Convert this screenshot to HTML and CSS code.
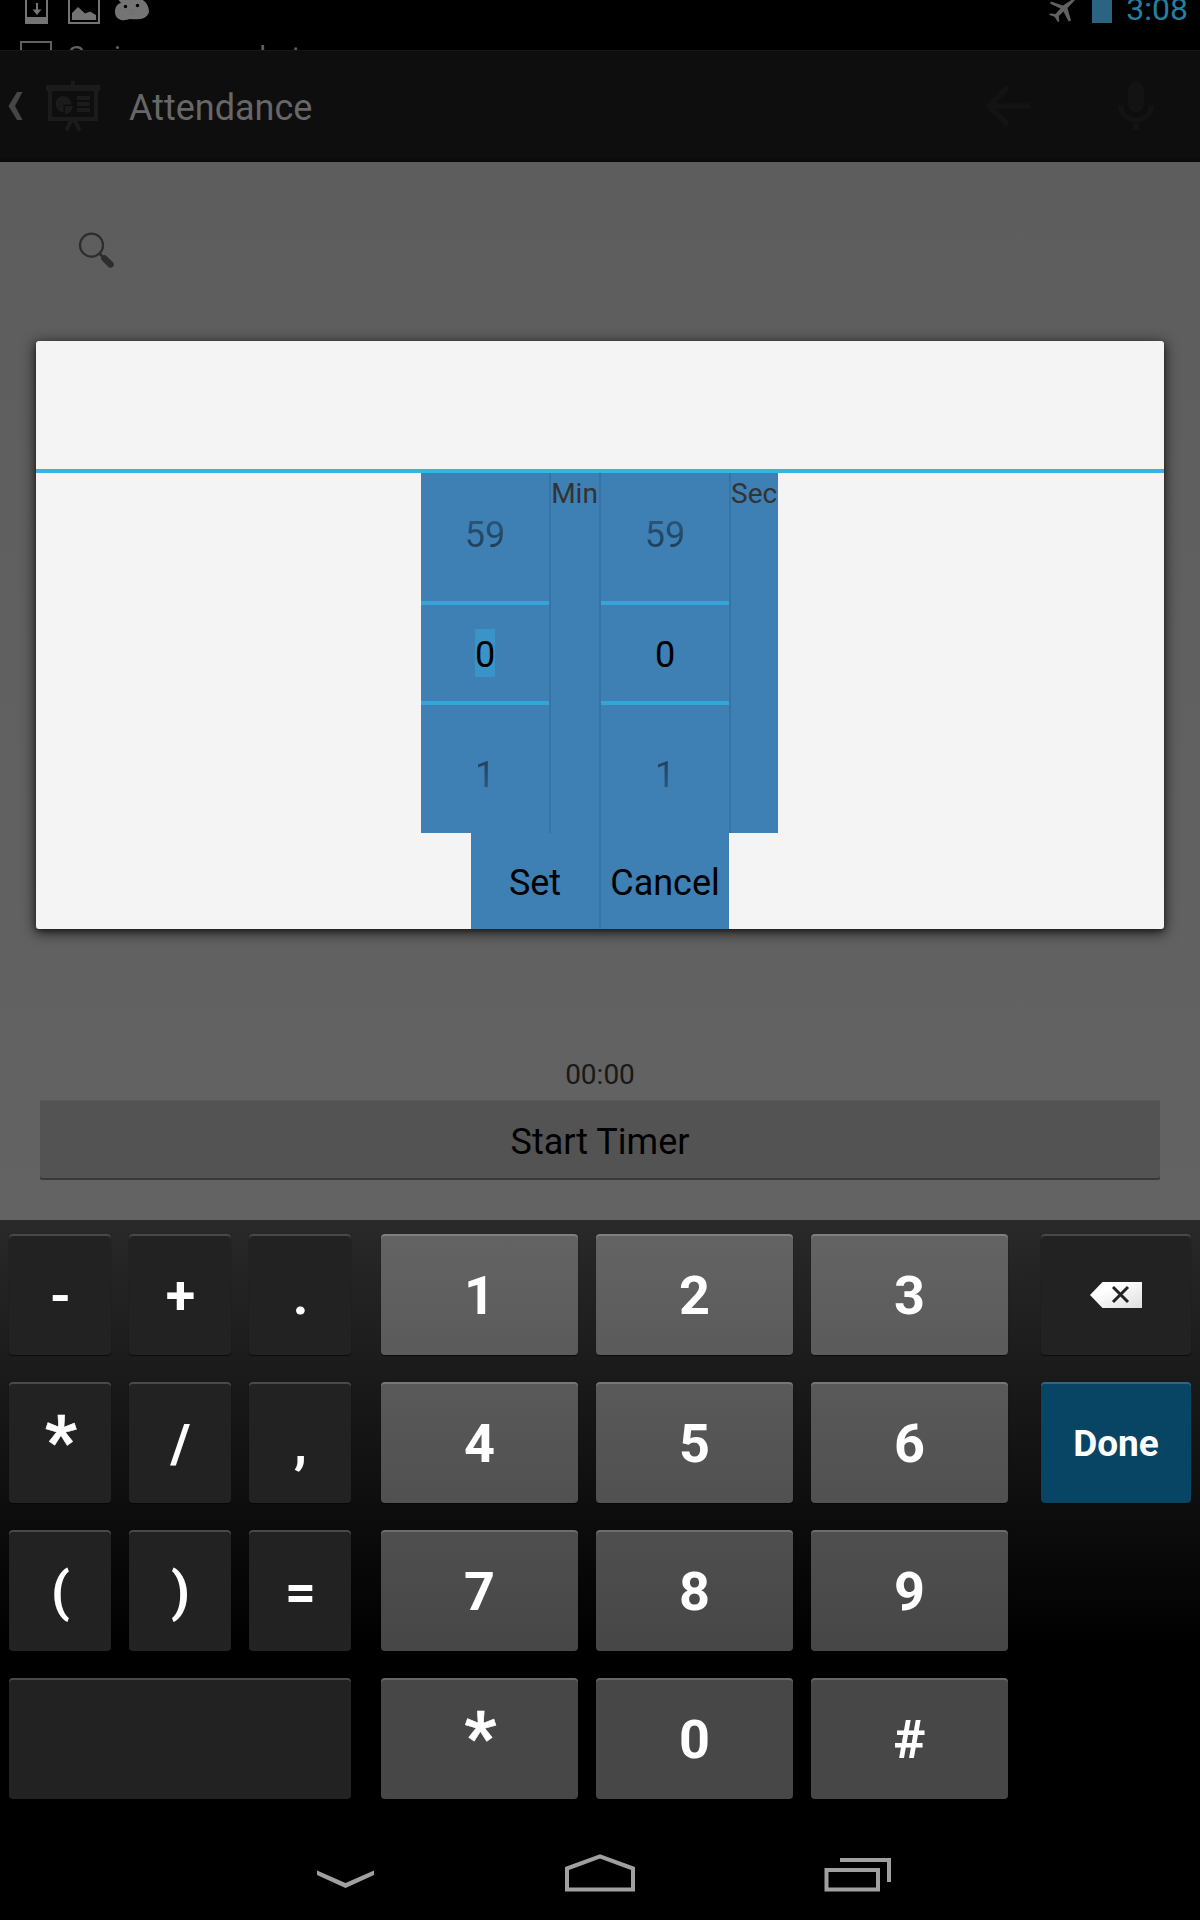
FILE: index.html
```html
<!DOCTYPE html>
<html lang="en">
<head>
<meta charset="utf-8">
<title>Attendance</title>
<link rel="stylesheet" href="styles.css">
</head>
<body>
<div class="screen">
  <header class="status">
    <div class="status-row">
      <svg class="status-icons" width="160" height="26" viewBox="0 0 160 26">
        <path d="M26 -2V23H47V-2" fill="none" stroke="#747474" stroke-width="2"/>
        <path d="M25 17H48V24H25Z" fill="#747474"/>
        <path d="M37 3V12" stroke="#747474" stroke-width="2"/>
        <path d="M32.500 9.500H41.500L37 15Z" fill="#747474"/>
        <path d="M69 -2V23H99V-2" fill="none" stroke="#747474" stroke-width="2"/>
        <path d="M72 20V13L78 7L85 13.500L90 11.500L96 15V20Z" fill="#747474"/>
        <path d="M117 -2L121 3C116 4 114 10 115.500 15C118 21 124 21 130 19C140 20 147 19 149 12C149 4 144 0 139 -2Z" fill="#747474"/>
        <circle cx="125.500" cy="6.500" r="1.700" fill="#000"/><circle cx="137.500" cy="5.500" r="1.700" fill="#000"/>
        <path d="M130 10V16M133 10V16" stroke="#656565" stroke-dasharray="1 2"/>
      </svg>
      <div class="status-right">
        <svg width="64" height="26" viewBox="1048 0 64 26">
          <path d="M1074.500 -2L1063 5.500L1051 1.500L1050 3.500L1060.500 8.500L1055.500 14L1050 13.500L1049 14.800L1054.500 16.800L1058 22L1059.300 21.200L1058.800 16L1063.500 11.500L1068.500 21.500L1071 20.500L1067.500 8L1076 -1Z" fill="#616161"/>
          <path d="M1092 -1H1112V23H1092Z" fill="#2a6480"/>
        </svg>
        <span class="clock">3:08</span>
      </div>
    </div>
    <div class="ticker"><span class="ticker-icon"></span><span class="ticker-text">Saving screenshot...</span></div>
  </header>

  <div class="actionbar">
    <svg width="110" height="110" viewBox="0 51 110 110">
      <path d="M17 92H22.500L15 106L22.500 120H17L8.500 106Z" fill="#454545"/>
      <g fill="#1b1b1b">
        <path d="M71 81H75V85H71ZM46 85H100V91H98V121H48V91H46ZM52 91V117H94V91Z" fill-rule="evenodd"/>
        <path d="M63.500 96A8 8 0 0 1 71.500 104.500H63.500V112A8 8 0 0 1 63.500 96ZM65 106H73A8 8 0 0 1 65 114Z"/>
        <path d="M77 96H90V100H77ZM77 102H90V106H77ZM77 108H90V112H77Z"/>
      </g>
      <path d="M72 119L67 129M74 119L79 129" stroke="#1b1b1b" stroke-width="4" stroke-linecap="round"/>
    </svg>
    <h1 class="title">Attendance</h1>
    <svg width="180" height="60" viewBox="980 76 180 60">
      <path d="M1008 87L989 106L1008 125M989 106H1030" fill="none" stroke="#131313" stroke-width="5.500"/>
      <rect x="1128" y="82" width="16" height="30" rx="8" fill="#131313"/>
      <path d="M1120.500 105A15.500 15 0 0 0 1151.500 105M1136 120V130" fill="none" stroke="#131313" stroke-width="5.500"/>
    </svg>
  </div>

  <main class="content">
    <svg class="search" width="40" height="40" viewBox="76 230 40 40">
      <circle cx="91.500" cy="245.200" r="11.500" fill="none" stroke="#2d2d2e" stroke-width="2.200"/>
      <path d="M99.500 253.500L103 257" stroke="#2d2d2e" stroke-width="2.500"/>
      <path d="M104.500 258.500L110.500 264.500" stroke="#2d2d2e" stroke-width="6.500" stroke-linecap="round"/>
    </svg>
    <div class="timer">00:00</div>
    <button class="start">Start Timer</button>
    <section class="dialog">
      <div class="dialog-title"></div>
      <div class="pickers">
        <div class="picker">
          <span class="prev">59</span><span class="value"><span class="selected">0</span></span><span class="next">1</span>
        </div>
        <div class="unit">Min</div>
        <div class="picker ruled">
          <span class="prev">59</span><span class="value"><span>0</span></span><span class="next">1</span>
        </div>
        <div class="unit">Sec</div>
      </div>
      <div class="actions"><button>Set</button><button class="ruled">Cancel</button></div>
    </section>
  </main>

  <section class="keyboard">
    <div class="keys symbols">
      <button>-</button><button>+</button><button>.</button>
      <button class="star">*</button><button>/</button><button>,</button>
      <button>(</button><button>)</button><button>=</button>
      <button class="space" aria-label="Space"></button>
    </div>
    <div class="keys digits">
      <button>1</button><button>2</button><button>3</button>
      <button>4</button><button>5</button><button>6</button>
      <button>7</button><button>8</button><button>9</button>
      <button class="star">*</button><button>0</button><button>#</button>
    </div>
    <div class="keys side">
      <button class="delete" aria-label="Delete">
        <svg width="54" height="28" viewBox="0 0 54 28">
          <defs><linearGradient id="del" x1="0" y1="0" x2="1" y2="1"><stop offset=".3" stop-color="#fff"/><stop offset="1" stop-color="#dedede"/></linearGradient></defs>
          <path d="M1 14L13.500 1H53V27H13.500Z" fill="url(#del)"/>
          <path d="M24 6L39 21M39 6L24 21" stroke="#222" stroke-width="3"/>
        </svg>
      </button>
      <button class="done">Done</button>
    </div>
  </section>

  <nav class="navbar">
    <svg width="60" height="50" viewBox="316 1848 60 50"><path d="M317 1870.500L345.500 1883L374 1870.500V1875L345.500 1888L317 1875Z" fill="#a0a0a0"/></svg>
    <svg width="72" height="50" viewBox="564 1848 72 50"><path d="M567 1889.500V1868.500L600 1856.300L633 1868.500V1889.500Z" fill="none" stroke="#a0a0a0" stroke-width="4"/></svg>
    <svg width="70" height="50" viewBox="823 1848 70 50"><path d="M826.500 1870H878V1889.500H826.500ZM840 1860H889V1882" fill="none" stroke="#a0a0a0" stroke-width="4"/></svg>
  </nav>
</div>
</body>
</html>
```
FILE: styles.css
```css
* { box-sizing: border-box; }
body { margin: 0; background: #000; font-family: Roboto, "Noto Sans", sans-serif; }
svg { display: block; flex: none; }
button { margin: 0; padding: 0; border: 0; background: none; font: inherit; color: inherit; }
.screen { width: 1200px; height: 1920px; display: flex; flex-direction: column; overflow: hidden; }

.status { height: 50px; overflow: hidden; background: #000; }
.status-row { height: 41px; display: flex; justify-content: space-between; align-items: flex-start; }
.status-right { display: flex; padding-right: 12px; gap: 14px; }
.clock { font-size: 32px; line-height: 38px; margin-top: -10px; color: #2380a3; }
.ticker { display: flex; height: 32px; padding-left: 20px; gap: 16px; }
.ticker-icon { width: 32px; height: 32px; border: 2px solid #616161; }
.ticker-text { font-size: 28px; line-height: 31px; letter-spacing: .25px; color: #616161; }

.actionbar {
  height: 112px; display: flex; align-items: center; padding-right: 40px;
  background: linear-gradient(#0e0e0e 0 106px, #080808); border-top: 1px solid #171717;
}
.actionbar svg { margin-top: -1px; }
.title { margin: 0 0 0 19px; flex: 1; font-size: 36px; font-weight: 400; line-height: 42px; color: #676767; padding-top: 3px; }

.content {
  position: relative; height: 1058px; padding: 68px 40px 40px;
  display: flex; flex-direction: column; background: linear-gradient(#5d5d5d, #636363);
}
.search { margin-left: 36px; }
.timer { margin-top: auto; font-size: 28px; line-height: 34px; text-align: center; color: #191919; margin-bottom: 8px; }
.start {
  height: 80px; font-size: 36px; color: #000; background: #535353; border-radius: 2px;
  box-shadow: inset 0 -2px #393939, inset 0 1px #595959; padding-top: 3px;
}

.dialog {
  position: absolute; left: 36px; top: 179px; width: 1128px; height: 588px;
  display: flex; flex-direction: column; align-items: center;
  background: #f4f4f4; border-radius: 3px; box-shadow: 0 3px 14px 1px rgba(0,0,0,.65), 0 2px 5px rgba(0,0,0,.4);
}
.dialog-title { align-self: stretch; height: 132px; border-bottom: 4px solid #33b5e5; }
.pickers { display: flex; height: 360px; margin-right: 1px; background: #3e7fb4; }
.picker { width: 128px; display: flex; flex-direction: column; text-align: center; font-size: 36px; }
.picker.ruled { width: 130px; }
.ruled, .unit { border-left: 2px solid #3873a4; }
.prev, .next { height: 128px; line-height: 42px; color: transparent; background-clip: text; -webkit-background-clip: text; }
.prev { padding-top: 41px; background-image: linear-gradient(#2f6590 30px, #1d3549 85px); }
.next { padding-top: 49px; background-image: linear-gradient(#1d3549 40px, #2f6590 100px); }
.value { height: 104px; padding-top: 24px; border: solid #35a5d8; border-width: 4px 0; line-height: 42px; color: #000; }
.value span { display: inline-block; height: 48px; padding-top: 5px; }
.selected { background: #3a94c8; }
.unit { width: 50px; padding: 4px 1px 0 0; font-size: 28px; line-height: 33px; text-align: center; color: #333; white-space: nowrap; }
.unit:last-child { width: 49px; }
.actions { display: flex; height: 96px; background: #3e7fb4; font-size: 36px; color: #000; }
.actions button { width: 128px; padding-top: 4px; }
.actions .ruled { width: 130px; border-left: 2px solid #3873a4; }

.keyboard {
  height: 600px; padding: 14px 9px 0; display: flex;
  background: linear-gradient(#292929, #000 430px);
  color: #fff; font-size: 54px; font-weight: 700;
}
.keys { display: grid; grid-auto-rows: 121px; gap: 27px 18px; align-content: start; }
.keys button {
  display: flex; align-items: center; justify-content: center; border-radius: 4px; padding-top: 2px;
  background: #222; box-shadow: inset 0 2px rgba(255,255,255,.18), 0 1px 1px rgba(0,0,0,.6);
}
.symbols button { padding-left: 1px; }
.keys .star { font-size: 70px; padding: 0 0 3px 2px; -webkit-text-stroke: .6px #fff; }
.symbols { grid-template-columns: repeat(3, 102px); margin-right: 30px; }
.space { grid-column: span 3; }
.digits { grid-template-columns: repeat(3, 197px); margin-right: 33px; }
.digits button { background: rgba(255,255,255,.278); }
.side { grid-template-columns: 150px; }
.keys .delete { padding-top: 0; }
.keys .done { background: #084464; font-size: 37px; padding-top: 2px; }

.navbar { height: 100px; display: flex; padding: 28px 307px 0 316px; justify-content: space-between; }
```
